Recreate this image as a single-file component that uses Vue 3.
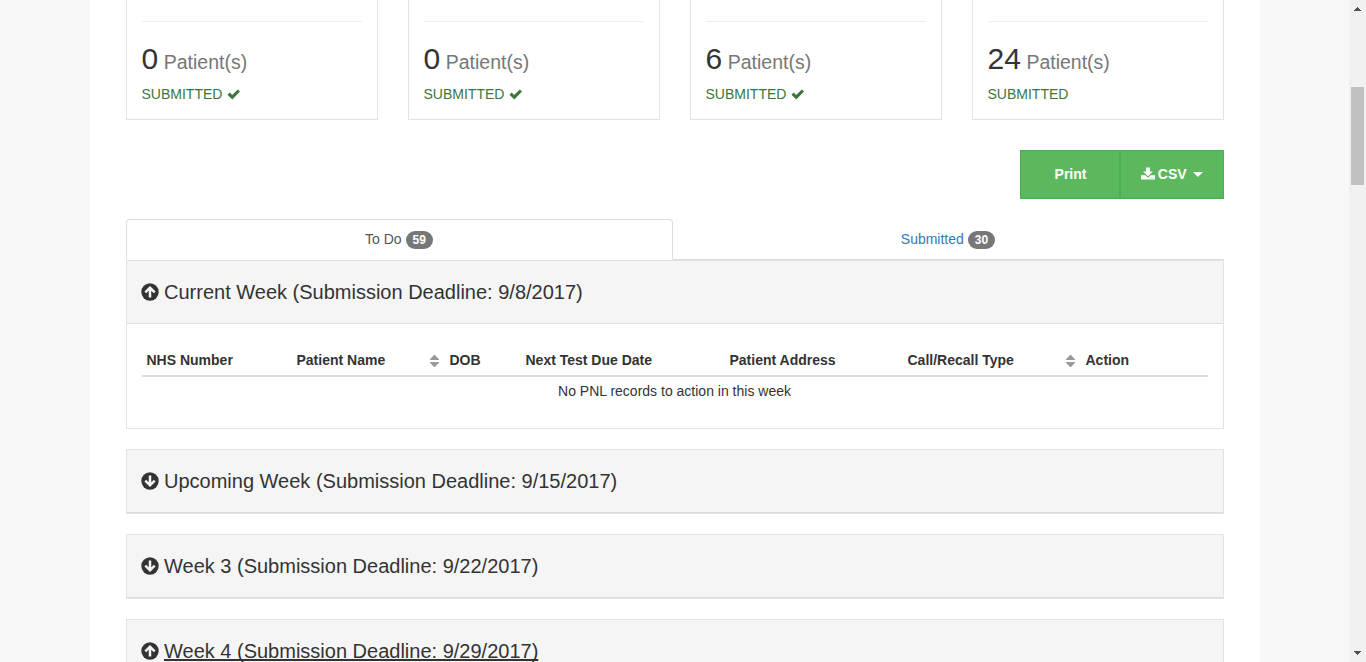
<script setup>
const cards = [
  { count: 0, done: true },
  { count: 0, done: true },
  { count: 6, done: true },
  { count: 24, done: false },
]
const columns = [
  { label: 'NHS Number' },
  { label: 'Patient Name', sortable: true },
  { label: 'DOB' },
  { label: 'Next Test Due Date' },
  { label: 'Patient Address' },
  { label: 'Call/Recall Type', sortable: true },
  { label: 'Action' },
]
const weeks = [
  { title: 'Current Week (Submission Deadline: 9/8/2017)', up: true, open: true },
  { title: 'Upcoming Week (Submission Deadline: 9/15/2017)' },
  { title: 'Week 3 (Submission Deadline: 9/22/2017)' },
  { title: 'Week 4 (Submission Deadline: 9/29/2017)', up: true, hovered: true },
]
</script>

<template>
  <div class="viewport">
    <div class="gutter">
      <main class="page">
        <section class="cards">
          <div v-for="(c, i) in cards" :key="i" class="card">
            <hr />
            <h3>{{ c.count }}<small>Patient(s)</small></h3>
            <p class="status">
              SUBMITTED
              <svg v-if="c.done" class="check" viewBox="0 0 14 11">
                <path d="M.5 5.8 L2.7 3.6 L5.2 6 L10.8 .4 L13 2.6 L5.3 10.4 Z" />
              </svg>
            </p>
          </div>
        </section>

        <div class="actions">
          <button class="btn print">Print</button>
          <button class="btn csv">
            <svg class="download" viewBox="0 0 14 13">
              <path d="M5 .5h4v4h3L7 9.2 2 4.5h3z" />
              <path d="M0 8.2h4.3L7 10.7l2.7-2.5H14v4.3H0z" />
              <path class="slot" d="M9.5 10.6h1v.7h-1zM11.6 10.6h1v.7h-1z" />
            </svg>
            <span>CSV</span>
            <i class="caret"></i>
          </button>
        </div>

        <nav class="tabs">
          <a class="tab active">To Do <span class="badge">59</span></a>
          <a class="tab">Submitted <span class="badge">30</span></a>
        </nav>

        <section v-for="w in weeks" :key="w.title" class="panel">
          <header class="head">
            <svg class="arrow" :class="{ down: !w.up }" viewBox="0 0 18 18">
              <circle cx="9" cy="9" r="8.7" />
              <path d="M9 14.4V5M4.3 9.4 9 4.7l4.7 4.7" />
            </svg>
            <h4 :class="{ hovered: w.hovered }">{{ w.title }}</h4>
          </header>
          <div v-if="w.open" class="body">
            <div class="row">
              <div v-for="col in columns" :key="col.label" class="th">
                {{ col.label }}
                <svg v-if="col.sortable" class="sort" viewBox="0 0 9 12">
                  <path d="M0 5V4.3L4 0h1l4 4.3V5zM0 7h9v.7L5 12H4L0 7.7z" />
                </svg>
              </div>
            </div>
            <p class="empty">No PNL records to action in this week</p>
          </div>
        </section>
      </main>
    </div>
    <aside class="scrollbar">
      <svg viewBox="0 0 7 4"><path d="M0 4V3h1V2h1V1h1V0h1v1h1v1h1v1h1v1z" /></svg>
      <div class="track"><div class="thumb"></div></div>
      <svg viewBox="0 0 7 4"><path d="M0 0h7v1H6v1H5v1H4v1H3V3H2V2H1V1H0z" /></svg>
    </aside>
  </div>
</template>

<style>
html, body { overflow: hidden; }
</style>

<style scoped>
* { box-sizing: border-box; }
.viewport {
  display: flex;
  width: 1366px;
  height: 662px;
  overflow: hidden;
  font: 14px/20px "Liberation Sans", Arial, sans-serif;
  color: #333;
}
.gutter { flex: 1; background: #f8f8f8; padding-left: 90px; overflow: hidden; }
.page { width: 1170px; height: 800px; padding: 0 36px; background: #fff; }
.cards { display: grid; grid-template-columns: repeat(4, 252px); gap: 30px; height: 120px; }
.card { border: 1px solid #e3e3e3; border-top: 0; padding: 21px 15px 0 14.5px; }
hr { margin: 0 0 0 .5px; border: 0; border-top: 1px solid #eee; }
h3 { margin: 20px 0 0; font-size: 30px; line-height: 33px; font-weight: 400; }
h3 small { margin-left: 5.5px; font-size: 19.5px; color: #777; }
.status { margin: 5px 0 0; color: #3c763d; }
.check { width: 14px; height: 11px; margin-left: .7px; fill: #3c763d; vertical-align: -1px; }
.actions { display: flex; justify-content: flex-end; margin-top: 30px; }
.btn {
  display: flex;
  align-items: center;
  justify-content: center;
  height: 49px;
  padding: 0 0 2px;
  border: 1px solid #4cae4c;
  border-radius: 0;
  background: #5cb85c;
  color: #fff;
  font: bold 14px/20px "Liberation Sans", Arial, sans-serif;
}
.print { width: 101px; }
.csv { width: 105px; margin-left: -2px; border-left-width: 2px; }
.download { width: 14px; height: 13px; margin: -1px 3px 0 0; fill: #fff; }
.slot { fill: #5cb85c; }
.caret { margin: 2px 0 0 6.5px; border: 5px solid transparent; border-top-color: #fff; border-bottom: 0; }
.tabs { display: flex; margin-top: 20px; height: 41px; }
.tab {
  display: flex;
  gap: 4px;
  justify-content: center;
  padding: 10px 1px 0 0;
  flex: 1;
  border-bottom: 1px solid #ddd;
  color: #337ab7;
}
.tab.active {
  flex: 0 0 547px;
  border: 1px solid #ddd;
  border-bottom-color: #fff;
  border-radius: 4px 4px 0 0;
  color: #555;
  padding-top: 9px;
}
.badge {
  height: 18px;
  margin-top: 2px;
  padding: 3px 7px;
  border-radius: 10px;
  background: #777;
  color: #fff;
  font-size: 12px;
  font-weight: bold;
  line-height: 12px;
}
.panel { margin-bottom: 20px; border: 1px solid #e3e3e3; }
.head {
  display: flex;
  align-items: center;
  height: 63px;
  padding: 0 14px;
  background: #f5f5f5;
  border-bottom: 1px solid #ddd;
}
.arrow { width: 18px; height: 18px; margin-right: 5px; fill: #333; }
.arrow path { fill: none; stroke: #f5f5f5; stroke-width: 2.5; }
.down { transform: rotate(180deg); }
h4 { margin: 0; font-size: 20px; line-height: 22px; font-weight: 400; }
.hovered { text-decoration: underline; text-decoration-skip-ink: none; }
.body { padding: 20px 15px 0; height: 104px; }
.row {
  display: grid;
  grid-template-columns: 150px 153px 76px 204px 178px 178px 127px;
  height: 33px;
  border-bottom: 2px solid #ddd;
}
.th { display: flex; justify-content: space-between; padding: 6px 6px 5px 4.5px; font-weight: bold; white-space: nowrap; }
.sort { width: 9px; height: 12px; margin-top: 5px; fill: #999; }
.empty { margin: 4px 1px 0 0; text-align: center; }
.scrollbar {
  display: flex;
  flex-direction: column;
  align-items: center;
  width: 17px;
  padding: 7px 0;
  background: #f1f1f1;
}
.scrollbar svg { width: 7px; height: 4px; fill: #505050; }
.track { flex: 1; padding-top: 76px; }
.thumb { width: 13px; height: 98px; background: #c1c1c1; }
</style>
